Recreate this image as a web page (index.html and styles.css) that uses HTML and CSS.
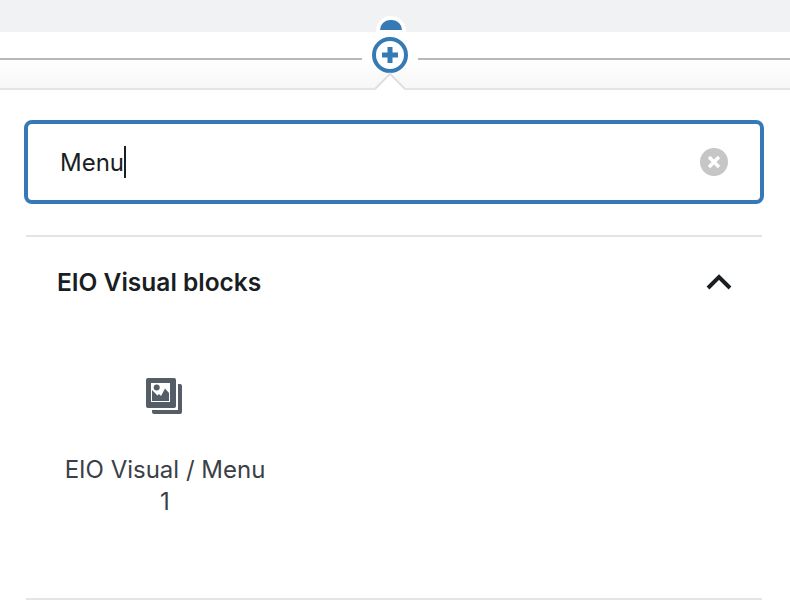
FILE: index.html
```html
<!DOCTYPE html>
<html lang="en">
<head>
<meta charset="utf-8">
<title>Block inserter</title>
<link rel="stylesheet" href="styles.css">
</head>
<body>
<div class="topbar"></div>
<div class="band">
  <span class="tab"><span class="tab-dome"></span></span>
  <div class="line-row">
    <span class="line line-left"></span>
    <span class="plus">
      <svg width="38" height="38" viewBox="0 0 38 38"><circle cx="19" cy="19" r="16" fill="#fff" stroke="#357ab5" stroke-width="4"/><path d="M16.500 11h5v5.500H27v5h-5.500V27h-5v-5.500H11v-5h5.500z" fill="#357ab5"/></svg>
    </span>
    <span class="line"></span>
  </div>
  <span class="arrow"></span>
</div>
<div class="panel">
  <div class="search">
    <span class="query">Menu</span><span class="caret"></span>
    <svg class="clear" width="28" height="28" viewBox="0 0 28 28"><circle cx="14" cy="14" r="14" fill="#c6c6c6"/><path d="M9 9l10 10M19 9L9 19" stroke="#fff" stroke-width="3.400" fill="none"/></svg>
  </div>
  <section class="group">
    <div class="group-head">
      <h2 class="group-title">EIO Visual blocks</h2>
      <svg class="chevron" width="26" height="16" viewBox="0 0 26 16"><path d="M2 14L13 3l11 11" stroke="#191e23" stroke-width="4" fill="none"/></svg>
    </div>
    <div class="block-item">
      <svg class="block-icon" width="36" height="36" viewBox="0 0 36 36">
        <path d="M32 6h2a2 2 0 0 1 2 2v26a2 2 0 0 1-2 2H8a2 2 0 0 1-2-2v-2h26z" fill="#555d66"/>
        <rect x="0" y="0" width="30" height="30" rx="2" fill="#555d66"/>
        <rect x="5" y="5" width="19" height="19" fill="#fff"/>
        <circle cx="10.700" cy="9.500" r="3" fill="#555d66"/>
        <path d="M6 12l5.500 5.500 1.500-1.500 2 2 4-7.500 4 4.500v8H6z" fill="#555d66"/>
      </svg>
      <div class="block-label">EIO Visual / Menu 1</div>
    </div>
  </section>
</div>
</body>
</html>
```
FILE: styles.css
```css
html, body {
  margin: 0;
  padding: 0;
  background: #fff;
  font-family: Inter, Roboto, "Liberation Sans", sans-serif;
  color: #191e23;
}
body {
  width: 790px;
  height: 610px;
  overflow: hidden;
}
.topbar {
  height: 32px;
  background: #f1f2f4;
}
.band {
  position: relative;
  height: 56px;
  border-bottom: 2px solid #e2e4e7;
  background: linear-gradient(#fff 0, #fff 26px, #f7f7f7 100%);
}
.line-row {
  display: flex;
  align-items: center;
  height: 54px;
}
.line {
  flex: 1;
  height: 2px;
  background: #b4b9be;
}
.line-left {
  flex: none;
  width: 362px;
}
.tab {
  position: absolute;
  left: 376px;
  top: -16px;
  width: 30px;
  height: 16px;
  background: #fff;
  border-radius: 15px 15px 0 0;
  display: flex;
  justify-content: center;
}
.tab-dome {
  margin-top: 4px;
  width: 22px;
  height: 10px;
  background: #357ab5;
  border-radius: 11px 11px 0 0;
}
.plus {
  flex: none;
  width: 56px;
  display: flex;
  align-items: center;
  justify-content: center;
}
.plus svg {
  display: block;
  margin-top: -8px;
}
.arrow {
  position: absolute;
  left: 379px;
  top: 45px;
  width: 22px;
  height: 22px;
  background: #fff;
  border-top: 2px solid #dcdee1;
  border-left: 2px solid #dcdee1;
  box-sizing: border-box;
  transform: rotate(45deg);
}
.panel {
  height: 520px;
  padding: 30px 26px 0 24px;
  background: #fff;
  position: relative;
  box-sizing: border-box;
}
.search {
  height: 84px;
  border: 4px solid #357ab5;
  border-radius: 8px;
  box-sizing: border-box;
  display: flex;
  align-items: center;
  padding: 0 32px;
  font-size: 24px;
}
.query {
  color: #191e23;
}
.caret {
  width: 2px;
  height: 32px;
  background: #191e23;
}
.clear {
  margin-left: auto;
}
.group {
  margin: 31px 2px 0;
  height: 365px;
  box-sizing: border-box;
  border-top: 2px solid #e2e4e7;
  border-bottom: 2px solid #e2e4e7;
}
.group-head {
  display: flex;
  align-items: center;
  justify-content: space-between;
  height: 90px;
  padding: 0 30px 2px 31px;
}
.group-title {
  margin: 0;
  font-size: 24.500px;
  font-weight: 600;
}
.chevron {
  display: block;
}
.block-item {
  width: 216px;
  margin-left: 31px;
  padding-top: 49px;
  display: flex;
  flex-direction: column;
  align-items: center;
}
.block-icon {
  display: block;
  margin-right: 2px;
}
.block-label {
  width: 204px;
  margin-top: 40px;
  text-align: center;
  font-size: 24px;
  line-height: 32px;
  color: #3a4046;
}
```
